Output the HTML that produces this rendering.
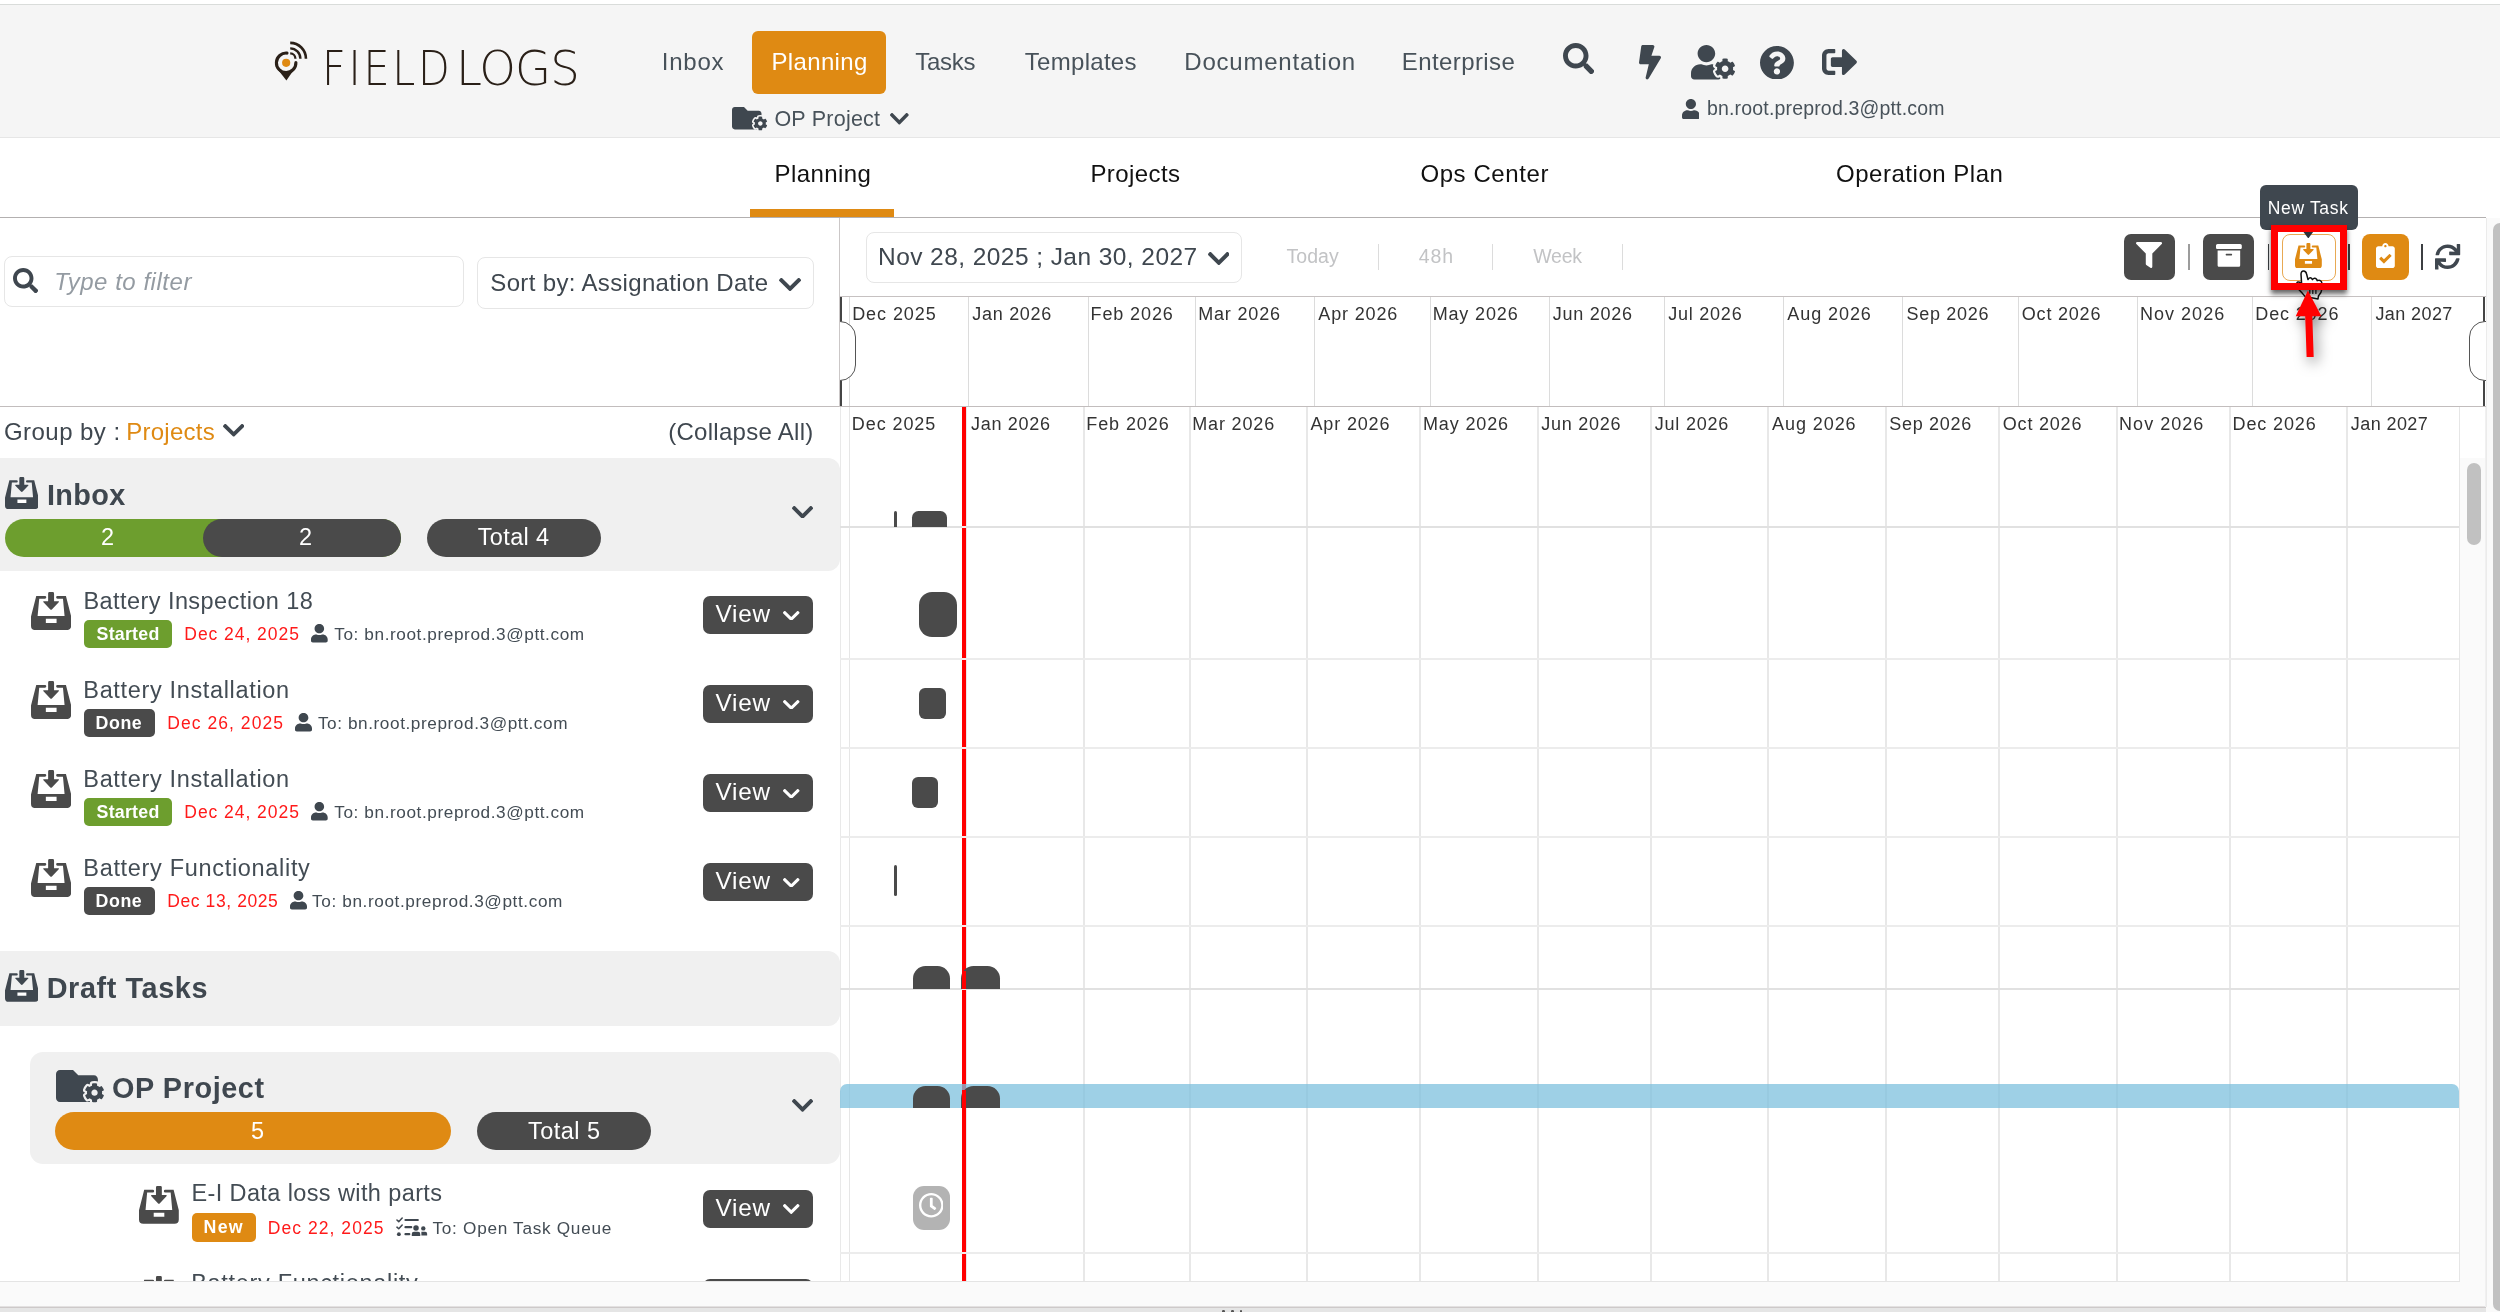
<!DOCTYPE html>
<html lang="en"><head><meta charset="utf-8"><title>FieldLogs - Planning</title>
<style>
html,body{margin:0;padding:0}
body{width:2500px;height:1312px;position:relative;overflow:hidden;background:#fff;font-family:"Liberation Sans",sans-serif}
.a{position:absolute;display:block}
.t{position:absolute;white-space:pre;line-height:1;display:block}
.clip{position:absolute;overflow:hidden}
</style></head><body>

<div class="a" style="left:0.00px;top:4.00px;width:2500.00px;height:1.00px;background:#d9dcda;"></div>
<div class="a" style="left:0.00px;top:5.00px;width:2500.00px;height:132.00px;background:#f5f5f5;"></div>
<div class="a" style="left:0.00px;top:137.00px;width:2500.00px;height:1.00px;background:#e6e6e6;"></div>
<svg class="a" style="left:270.00px;top:36.00px;" width="42.00" height="48.00" viewBox="270 36 42 48" preserveAspectRatio="none"><path d="M275.5,66.6 L286.4,80.4 L297,65.2 Z" fill="#2a2018"/><circle cx="286.16" cy="62.8" r="9.75" fill="#f5f5f5"/><path d="M287.0,53.1 A9.75,9.75 0 1 0 295.9,62.5" fill="none" stroke="#2a2018" stroke-width="3.1" stroke-linecap="round"/><g fill="none" stroke="#2a2018"><path d="M290.2,53.35 A5.35,5.35 0 0 1 295.45,58.7" stroke-width="2.3"/><path d="M290.2,48.4 A10.3,10.3 0 0 1 300.4,58.7" stroke-width="2.4"/><path d="M290.2,42.85 A15.85,15.85 0 0 1 305.95,58.7" stroke-width="2.6"/></g><circle cx="286.16" cy="62.8" r="4.1" fill="#df8a13"/></svg>
<div class="a" style="left:752.00px;top:31.00px;width:134.00px;height:63.00px;background:#df8a13;border-radius:6px;"></div>
<svg class="a" style="left:732.00px;top:107.20px;" width="29.50" height="22.40" viewBox="0 64 512 384" preserveAspectRatio="none"><path fill="#3f474f" d="M464 128H272l-64-64H48C21.490 64 0 85.490 0 112v288c0 26.510 21.490 48 48 48h416c26.510 0 48-21.490 48-48V176c0-26.510-21.490-48-48-48z"/></svg><svg class="a" style="left:751.90px;top:114.90px;" width="16.70" height="16.90" viewBox="-37.63496296296296 -48.17496296296296 587.3699259259259 608.5499259259259" preserveAspectRatio="none"><circle cx="256" cy="256" r="110" fill="#f5f5f5"/><path d="M487.400 315.700l-42.600-24.600c4.300-23.200 4.300-47 0-70.200l42.600-24.600c4.900-2.800 7.100-8.600 5.500-14-11.100-35.600-30-67.800-54.700-94.600-3.800-4.100-10-5.100-14.800-2.300L380.800 110c-17.900-15.400-38.500-27.300-60.800-35.100V25.800c0-5.600-3.900-10.500-9.400-11.700-36.700-8.200-74.300-7.800-109.200 0-5.500 1.200-9.400 6.100-9.400 11.700V75c-22.200 7.900-42.800 19.800-60.800 35.100L88.700 85.500c-4.900-2.800-11-1.900-14.800 2.300-24.700 26.700-43.600 58.900-54.700 94.600-1.700 5.400.6 11.200 5.500 14L67.300 221c-4.300 23.200-4.300 47 0 70.200l-42.600 24.600c-4.900 2.800-7.100 8.600-5.500 14 11.100 35.600 30 67.800 54.700 94.600 3.800 4.100 10 5.100 14.800 2.300l42.600-24.600c17.900 15.400 38.500 27.300 60.800 35.100v49.200c0 5.600 3.900 10.500 9.400 11.700 36.700 8.200 74.300 7.800 109.200 0 5.500-1.200 9.400-6.100 9.400-11.700v-49.200c22.200-7.900 42.800-19.800 60.800-35.100l42.600 24.600c4.900 2.800 11 1.900 14.800-2.300 24.700-26.700 43.600-58.900 54.700-94.600 1.500-5.500-.7-11.300-5.600-14.100zM256 336c-44.100 0-80-35.900-80-80s35.900-80 80-80 80 35.900 80 80-35.900 80-80 80z" fill="#3f474f" stroke="#f5f5f5" stroke-width="112.5" stroke-linejoin="round" paint-order="stroke"/></svg>
<svg class="a" style="left:889.90px;top:113.30px;" width="18.70" height="11.50" viewBox="5.66 123.49 436.69 265.01" preserveAspectRatio="none"><path fill="#3f474f" d="M207.029 381.476L12.686 187.132c-9.373-9.373-9.373-24.569 0-33.941l22.667-22.667c9.357-9.357 24.522-9.375 33.901-.04L224 284.505l154.745-154.021c9.379-9.335 24.544-9.317 33.901.04l22.667 22.667c9.373 9.373 9.373 24.569 0 33.941L240.971 381.476c-9.373 9.372-24.569 9.372-33.942 0z"/></svg>
<svg class="a" style="left:1562.70px;top:42.70px;" width="31.40" height="31.40" viewBox="0 0 512 512" preserveAspectRatio="none"><path fill="#3f474f" d="M505 442.7L405.3 343c-4.500-4.500-10.600-7-17-7H372c27.600-35.300 44-79.700 44-128C416 93.100 322.900 0 208 0S0 93.100 0 208s93.100 208 208 208c48.300 0 92.700-16.400 128-44v16.300c0 6.400 2.500 12.500 7 17l99.700 99.700c9.400 9.400 24.600 9.400 33.900 0l28.300-28.300c9.400-9.400 9.400-24.600.1-34zM208 336c-70.700 0-128-57.200-128-128 0-70.700 57.200-128 128-128 70.700 0 128 57.200 128 128 0 70.700-57.200 128-128 128z"/></svg>
<svg class="a" style="left:1638.60px;top:45.20px;" width="22.00" height="34.40" viewBox="0 0 320 512" preserveAspectRatio="none"><path fill="#3f474f" d="M296 160H180.600l42.600-129.800C227.200 15 215.700 0 200 0H56C44 0 33.800 8.900 32.200 20.800l-32 240C-1.700 275.200 9.500 288 24 288h118.700L96.600 482.500c-3.600 15.200 8 29.500 23.300 29.500 8.400 0 16.400-4.400 20.800-12l176-304c9.300-15.900-2.200-36-20.700-36z"/></svg>
<svg class="a" style="left:1691.20px;top:45.20px;" width="44.00" height="34.40" viewBox="0 0 640 512" preserveAspectRatio="none"><path fill="#3f474f" d="M610.500 373.300c2.600-14.100 2.600-28.500 0-42.600l25.800-14.900c3-1.700 4.300-5.200 3.300-8.500-6.700-21.600-18.200-41.200-33.200-57.400-2.300-2.500-6-3.100-9-1.400l-25.800 14.900c-10.900-9.300-23.400-16.500-36.900-21.300v-29.800c0-3.400-2.400-6.400-5.700-7.100-22.300-5-45-4.800-66.200 0-3.300.7-5.700 3.700-5.700 7.100v29.800c-13.500 4.800-26 12-36.900 21.300l-25.800-14.900c-2.900-1.700-6.700-1.100-9 1.400-15 16.200-26.500 35.800-33.200 57.400-1 3.300.4 6.800 3.300 8.500l25.800 14.900c-2.600 14.100-2.600 28.500 0 42.600l-25.800 14.900c-3 1.700-4.300 5.200-3.300 8.500 6.700 21.600 18.200 41.100 33.200 57.400 2.300 2.500 6 3.100 9 1.400l25.800-14.900c10.900 9.300 23.400 16.500 36.900 21.300v29.800c0 3.400 2.400 6.400 5.700 7.100 22.300 5 45 4.800 66.200 0 3.300-.7 5.700-3.700 5.700-7.100v-29.800c13.500-4.800 26-12 36.900-21.300l25.800 14.900c2.900 1.700 6.700 1.100 9-1.400 15-16.200 26.500-35.800 33.200-57.400 1-3.300-.4-6.800-3.300-8.500l-25.800-14.900zM496 400.500c-26.800 0-48.500-21.800-48.500-48.500s21.800-48.500 48.500-48.500 48.500 21.800 48.500 48.500-21.700 48.500-48.500 48.500zM224 256c70.700 0 128-57.300 128-128S294.700 0 224 0 96 57.300 96 128s57.300 128 128 128zm201.200 226.500c-2.300-1.200-4.600-2.600-6.800-3.900l-7.900 4.600c-6 3.400-12.800 5.300-19.600 5.300-10.900 0-21.400-4.600-28.900-12.600-18.300-19.800-32.300-43.900-40.200-69.600-5.500-17.700 1.900-36.400 17.900-45.700l7.900-4.600c-.1-2.600-.1-5.200 0-7.800l-7.900-4.600c-16-9.200-23.400-28-17.900-45.700.9-2.900 2.200-5.800 3.200-8.700-3.800-.3-7.500-1.200-11.400-1.200h-16.700c-22.200 10.200-46.900 16-72.900 16s-50.600-5.800-72.900-16h-16.700C60.200 288 0 348.200 0 422.400V464c0 26.500 21.500 48 48 48h352c10.100 0 19.500-3.200 27.200-8.500-1.200-3.800-2-7.700-2-11.800v-9.200z"/></svg>
<svg class="a" style="left:1759.80px;top:45.50px;" width="33.90" height="33.60" viewBox="8 8 496 496" preserveAspectRatio="none"><path fill="#3f474f" d="M504 256c0 136.997-111.043 248-248 248S8 392.997 8 256C8 119.083 119.043 8 256 8s248 111.083 248 248zM262.655 90c-54.497 0-89.255 22.957-116.549 63.758-3.536 5.286-2.353 12.415 2.715 16.258l34.699 26.310c5.205 3.947 12.621 3.008 16.665-2.122 17.864-22.658 30.113-35.797 57.303-35.797 20.429 0 45.698 13.148 45.698 32.958 0 14.976-12.363 22.667-32.534 33.976C247.128 238.528 216 254.941 216 296v4c0 6.627 5.373 12 12 12h56c6.627 0 12-5.373 12-12v-1.333c0-28.462 83.186-29.647 83.186-106.667 0-58.002-60.165-102-116.531-102zM256 338c-25.365 0-46 20.635-46 46 0 25.364 20.635 46 46 46s46-20.636 46-46c0-25.365-20.635-46-46-46z"/></svg>
<svg class="a" style="left:1822.30px;top:49.40px;" width="34.90" height="26.00" viewBox="0 64 504 384" preserveAspectRatio="none"><path fill="#3f474f" d="M497 273L329 441c-15 15-41 4.500-41-17v-96H152c-13.300 0-24-10.700-24-24v-96c0-13.300 10.700-24 24-24h136V88c0-21.400 25.900-32 41-17l168 168c9.300 9.400 9.300 24.600 0 34zM192 436v-40c0-6.600-5.400-12-12-12H96c-17.700 0-32-14.300-32-32V160c0-17.700 14.300-32 32-32h84c6.600 0 12-5.400 12-12V76c0-6.600-5.400-12-12-12H96c-53 0-96 43-96 96v192c0 53 43 96 96 96h84c6.600 0 12-5.400 12-12z"/></svg>
<svg class="a" style="left:1681.50px;top:99.30px;" width="17.80" height="20.20" viewBox="0 0 448 512" preserveAspectRatio="none"><path fill="#3f474f" d="M224 256c70.700 0 128-57.300 128-128S294.700 0 224 0 96 57.300 96 128s57.300 128 128 128zm89.600 32h-16.700c-22.200 10.200-46.900 16-72.900 16s-50.600-5.800-72.900-16h-16.700C60.200 288 0 348.200 0 422.400V464c0 26.500 21.500 48 48 48h352c26.500 0 48-21.500 48-48v-41.600c0-74.200-60.200-134.400-134.400-134.400z"/></svg>
<div class="a" style="left:750.00px;top:209.00px;width:144.00px;height:8.00px;background:#df8a13;"></div>
<div class="a" style="left:0.00px;top:217.00px;width:2486.00px;height:1.00px;background:#b3b0b0;"></div>
<div class="a" style="left:4.00px;top:256.00px;width:460.00px;height:51.00px;background:#fff;border:1px solid #e6e6e6;border-radius:8px;box-sizing:border-box;"></div>
<svg class="a" style="left:13.10px;top:268.00px;" width="25.20" height="25.30" viewBox="0 0 512 512" preserveAspectRatio="none"><path fill="#3f474f" d="M505 442.7L405.3 343c-4.500-4.500-10.600-7-17-7H372c27.600-35.300 44-79.700 44-128C416 93.100 322.900 0 208 0S0 93.100 0 208s93.100 208 208 208c48.300 0 92.700-16.400 128-44v16.300c0 6.400 2.500 12.500 7 17l99.700 99.700c9.400 9.400 24.600 9.400 33.900 0l28.300-28.300c9.400-9.400 9.400-24.600.1-34zM208 336c-70.700 0-128-57.200-128-128 0-70.700 57.200-128 128-128 70.700 0 128 57.200 128 128 0 70.700-57.200 128-128 128z"/></svg>
<div class="a" style="left:477.00px;top:256.50px;width:337.00px;height:52.00px;background:#fff;border:1px solid #e6e6e6;border-radius:8px;box-sizing:border-box;"></div>
<svg class="a" style="left:778.60px;top:277.50px;" width="22.10" height="13.00" viewBox="5.66 123.49 436.69 265.01" preserveAspectRatio="none"><path fill="#3f474f" d="M207.029 381.476L12.686 187.132c-9.373-9.373-9.373-24.569 0-33.941l22.667-22.667c9.357-9.357 24.522-9.375 33.901-.04L224 284.505l154.745-154.021c9.379-9.335 24.544-9.317 33.901.04l22.667 22.667c9.373 9.373 9.373 24.569 0 33.941L240.971 381.476c-9.373 9.372-24.569 9.372-33.942 0z"/></svg>
<svg class="a" style="left:222.60px;top:424.00px;" width="21.40" height="12.60" viewBox="5.66 123.49 436.69 265.01" preserveAspectRatio="none"><path fill="#3f474f" d="M207.029 381.476L12.686 187.132c-9.373-9.373-9.373-24.569 0-33.941l22.667-22.667c9.357-9.357 24.522-9.375 33.901-.04L224 284.505l154.745-154.021c9.379-9.335 24.544-9.317 33.901.04l22.667 22.667c9.373 9.373 9.373 24.569 0 33.941L240.971 381.476c-9.373 9.372-24.569 9.372-33.942 0z"/></svg>
<div class="clip" style="left:0;top:407px;width:840px;height:874px">
<div class="a" style="left:0.00px;top:51.00px;width:840.00px;height:112.60px;background:#f0f0f0;border-radius:0 12px 12px 0;"></div>
<div class="a" style="left:0.00px;top:544.40px;width:840.00px;height:74.50px;background:#f0f0f0;border-radius:0 12px 12px 0;"></div>
<div class="a" style="left:29.80px;top:644.70px;width:810.20px;height:112.30px;background:#f0f0f0;border-radius:13px;"></div>
<svg class="a" style="left:4.80px;top:69.50px;" width="33.60" height="32.10" viewBox="0 0 880 830" preserveAspectRatio="none"><rect x="325" y="585" width="235" height="90" fill="#fff"/><path fill="#3f474f" fill-rule="evenodd" d="M115,85 H305 Q335,85 335,115 Q335,145 305,145 H180 L145,525 H735 L700,145 H580 Q550,145 550,115 Q550,85 580,85 H765 L880,535 V735 Q880,830 785,830 H95 Q0,830 0,735 V535 Z M325,585 H560 V675 H325 Z M375,30 Q375,0 405,0 H475 Q505,0 505,30 V200 H595 Q630,200 607,225 L462,378 Q440,400 418,378 L273,225 Q250,200 285,200 H375 Z"/></svg>
<svg class="a" style="left:4.80px;top:563.10px;" width="33.60" height="31.80" viewBox="0 0 880 830" preserveAspectRatio="none"><rect x="325" y="585" width="235" height="90" fill="#fff"/><path fill="#3f474f" fill-rule="evenodd" d="M115,85 H305 Q335,85 335,115 Q335,145 305,145 H180 L145,525 H735 L700,145 H580 Q550,145 550,115 Q550,85 580,85 H765 L880,535 V735 Q880,830 785,830 H95 Q0,830 0,735 V535 Z M325,585 H560 V675 H325 Z M375,30 Q375,0 405,0 H475 Q505,0 505,30 V200 H595 Q630,200 607,225 L462,378 Q440,400 418,378 L273,225 Q250,200 285,200 H375 Z"/></svg>
<svg class="a" style="left:56.00px;top:662.90px;" width="41.90" height="32.00" viewBox="0 64 512 384" preserveAspectRatio="none"><path fill="#3f474f" d="M464 128H272l-64-64H48C21.490 64 0 85.490 0 112v288c0 26.510 21.490 48 48 48h416c26.510 0 48-21.490 48-48V176c0-26.510-21.490-48-48-48z"/></svg><svg class="a" style="left:83.30px;top:674.00px;" width="23.10" height="23.40" viewBox="-37.22117647058823 -47.76117647058823 586.5423529411764 607.7223529411765" preserveAspectRatio="none"><circle cx="256" cy="256" r="110" fill="#f0f0f0"/><path d="M487.400 315.700l-42.600-24.600c4.300-23.200 4.300-47 0-70.200l42.600-24.600c4.900-2.800 7.100-8.600 5.500-14-11.100-35.600-30-67.800-54.700-94.600-3.800-4.100-10-5.100-14.800-2.300L380.800 110c-17.900-15.400-38.500-27.300-60.800-35.100V25.800c0-5.600-3.900-10.500-9.400-11.700-36.700-8.200-74.300-7.800-109.200 0-5.500 1.200-9.400 6.100-9.400 11.700V75c-22.200 7.900-42.800 19.800-60.800 35.100L88.700 85.500c-4.900-2.800-11-1.900-14.800 2.300-24.700 26.700-43.600 58.900-54.700 94.600-1.700 5.400.6 11.200 5.500 14L67.300 221c-4.300 23.200-4.300 47 0 70.200l-42.600 24.600c-4.900 2.800-7.100 8.600-5.500 14 11.100 35.600 30 67.800 54.700 94.600 3.800 4.100 10 5.100 14.800 2.300l42.600-24.600c17.900 15.400 38.500 27.300 60.800 35.100v49.200c0 5.600 3.900 10.500 9.400 11.700 36.700 8.200 74.300 7.800 109.200 0 5.500-1.200 9.400-6.100 9.400-11.700v-49.200c22.200-7.900 42.800-19.800 60.800-35.100l42.600 24.600c4.900 2.800 11 1.900 14.800-2.300 24.700-26.700 43.600-58.900 54.700-94.600 1.500-5.500-.7-11.300-5.600-14.100zM256 336c-44.100 0-80-35.900-80-80s35.900-80 80-80 80 35.900 80 80-35.900 80-80 80z" fill="#3f474f" stroke="#f0f0f0" stroke-width="111.7" stroke-linejoin="round" paint-order="stroke"/></svg>
<div class="a" style="left:5.00px;top:111.90px;width:396.20px;height:37.80px;background:#6d9e2e;border-radius:19px;"></div>
<div class="a" style="left:203.00px;top:111.90px;width:198.20px;height:37.80px;background:#4a4a4a;border-radius:19px;"></div>
<div class="a" style="left:426.70px;top:111.90px;width:174.10px;height:37.80px;background:#4a4a4a;border-radius:19px;"></div>
<div class="a" style="left:55.20px;top:705.30px;width:396.00px;height:37.80px;background:#df8a13;border-radius:19px;"></div>
<div class="a" style="left:476.70px;top:705.30px;width:174.40px;height:37.80px;background:#4a4a4a;border-radius:19px;"></div>
<svg class="a" style="left:792.20px;top:98.60px;" width="21.10" height="12.80" viewBox="5.66 123.49 436.69 265.01" preserveAspectRatio="none"><path fill="#3f474f" d="M207.029 381.476L12.686 187.132c-9.373-9.373-9.373-24.569 0-33.941l22.667-22.667c9.357-9.357 24.522-9.375 33.901-.04L224 284.505l154.745-154.021c9.379-9.335 24.544-9.317 33.901.04l22.667 22.667c9.373 9.373 9.373 24.569 0 33.941L240.971 381.476c-9.373 9.372-24.569 9.372-33.942 0z"/></svg>
<svg class="a" style="left:792.20px;top:692.20px;" width="21.10" height="12.80" viewBox="5.66 123.49 436.69 265.01" preserveAspectRatio="none"><path fill="#3f474f" d="M207.029 381.476L12.686 187.132c-9.373-9.373-9.373-24.569 0-33.941l22.667-22.667c9.357-9.357 24.522-9.375 33.901-.04L224 284.505l154.745-154.021c9.379-9.335 24.544-9.317 33.901.04l22.667 22.667c9.373 9.373 9.373 24.569 0 33.941L240.971 381.476c-9.373 9.372-24.569 9.372-33.942 0z"/></svg>
<svg class="a" style="left:31.10px;top:185.30px;" width="40.20" height="38.10" viewBox="0 0 880 830" preserveAspectRatio="none"><path fill="#4a4a4a" fill-rule="evenodd" d="M115,85 H305 Q335,85 335,115 Q335,145 305,145 H180 L145,525 H735 L700,145 H580 Q550,145 550,115 Q550,85 580,85 H765 L880,535 V735 Q880,830 785,830 H95 Q0,830 0,735 V535 Z M325,585 H560 V675 H325 Z M375,30 Q375,0 405,0 H475 Q505,0 505,30 V200 H595 Q630,200 607,225 L462,378 Q440,400 418,378 L273,225 Q250,200 285,200 H375 Z"/></svg>
<div class="a" style="left:83.50px;top:213.00px;width:88.20px;height:28.30px;background:#6d9e2e;border-radius:5px;"></div>
<svg class="a" style="left:311.30px;top:217.20px;" width="16.70" height="18.50" viewBox="0 0 448 512" preserveAspectRatio="none"><path fill="#3f474f" d="M224 256c70.700 0 128-57.300 128-128S294.700 0 224 0 96 57.300 96 128s57.300 128 128 128zm89.600 32h-16.700c-22.200 10.200-46.900 16-72.900 16s-50.600-5.800-72.900-16h-16.700C60.200 288 0 348.200 0 422.400V464c0 26.500 21.500 48 48 48h352c26.500 0 48-21.500 48-48v-41.600c0-74.200-60.200-134.400-134.400-134.400z"/></svg>
<div class="a" style="left:703.00px;top:189.00px;width:110.00px;height:38.00px;background:#4a4a4a;border-radius:7px;"></div>
<svg class="a" style="left:783.40px;top:203.60px;" width="16.50" height="9.90" viewBox="5.66 123.49 436.69 265.01" preserveAspectRatio="none"><path fill="#fff" d="M207.029 381.476L12.686 187.132c-9.373-9.373-9.373-24.569 0-33.941l22.667-22.667c9.357-9.357 24.522-9.375 33.901-.04L224 284.505l154.745-154.021c9.379-9.335 24.544-9.317 33.901.04l22.667 22.667c9.373 9.373 9.373 24.569 0 33.941L240.971 381.476c-9.373 9.372-24.569 9.372-33.942 0z"/></svg>
<svg class="a" style="left:31.10px;top:274.30px;" width="40.20" height="38.10" viewBox="0 0 880 830" preserveAspectRatio="none"><path fill="#4a4a4a" fill-rule="evenodd" d="M115,85 H305 Q335,85 335,115 Q335,145 305,145 H180 L145,525 H735 L700,145 H580 Q550,145 550,115 Q550,85 580,85 H765 L880,535 V735 Q880,830 785,830 H95 Q0,830 0,735 V535 Z M325,585 H560 V675 H325 Z M375,30 Q375,0 405,0 H475 Q505,0 505,30 V200 H595 Q630,200 607,225 L462,378 Q440,400 418,378 L273,225 Q250,200 285,200 H375 Z"/></svg>
<div class="a" style="left:83.60px;top:302.00px;width:71.10px;height:28.30px;background:#4a4a4a;border-radius:5px;"></div>
<svg class="a" style="left:295.10px;top:306.20px;" width="17.00" height="18.50" viewBox="0 0 448 512" preserveAspectRatio="none"><path fill="#3f474f" d="M224 256c70.700 0 128-57.300 128-128S294.700 0 224 0 96 57.300 96 128s57.300 128 128 128zm89.600 32h-16.700c-22.200 10.200-46.900 16-72.900 16s-50.600-5.800-72.900-16h-16.700C60.200 288 0 348.200 0 422.400V464c0 26.500 21.500 48 48 48h352c26.500 0 48-21.500 48-48v-41.600c0-74.200-60.200-134.400-134.400-134.400z"/></svg>
<div class="a" style="left:703.00px;top:278.00px;width:110.00px;height:38.00px;background:#4a4a4a;border-radius:7px;"></div>
<svg class="a" style="left:783.40px;top:292.60px;" width="16.50" height="9.90" viewBox="5.66 123.49 436.69 265.01" preserveAspectRatio="none"><path fill="#fff" d="M207.029 381.476L12.686 187.132c-9.373-9.373-9.373-24.569 0-33.941l22.667-22.667c9.357-9.357 24.522-9.375 33.901-.04L224 284.505l154.745-154.021c9.379-9.335 24.544-9.317 33.901.04l22.667 22.667c9.373 9.373 9.373 24.569 0 33.941L240.971 381.476c-9.373 9.372-24.569 9.372-33.942 0z"/></svg>
<svg class="a" style="left:31.10px;top:363.30px;" width="40.20" height="38.10" viewBox="0 0 880 830" preserveAspectRatio="none"><path fill="#4a4a4a" fill-rule="evenodd" d="M115,85 H305 Q335,85 335,115 Q335,145 305,145 H180 L145,525 H735 L700,145 H580 Q550,145 550,115 Q550,85 580,85 H765 L880,535 V735 Q880,830 785,830 H95 Q0,830 0,735 V535 Z M325,585 H560 V675 H325 Z M375,30 Q375,0 405,0 H475 Q505,0 505,30 V200 H595 Q630,200 607,225 L462,378 Q440,400 418,378 L273,225 Q250,200 285,200 H375 Z"/></svg>
<div class="a" style="left:83.50px;top:391.00px;width:88.20px;height:28.30px;background:#6d9e2e;border-radius:5px;"></div>
<svg class="a" style="left:311.30px;top:395.20px;" width="16.70" height="18.50" viewBox="0 0 448 512" preserveAspectRatio="none"><path fill="#3f474f" d="M224 256c70.700 0 128-57.300 128-128S294.700 0 224 0 96 57.300 96 128s57.300 128 128 128zm89.600 32h-16.700c-22.200 10.200-46.900 16-72.900 16s-50.600-5.800-72.900-16h-16.700C60.200 288 0 348.200 0 422.400V464c0 26.500 21.500 48 48 48h352c26.500 0 48-21.500 48-48v-41.600c0-74.200-60.200-134.400-134.400-134.400z"/></svg>
<div class="a" style="left:703.00px;top:367.00px;width:110.00px;height:38.00px;background:#4a4a4a;border-radius:7px;"></div>
<svg class="a" style="left:783.40px;top:381.60px;" width="16.50" height="9.90" viewBox="5.66 123.49 436.69 265.01" preserveAspectRatio="none"><path fill="#fff" d="M207.029 381.476L12.686 187.132c-9.373-9.373-9.373-24.569 0-33.941l22.667-22.667c9.357-9.357 24.522-9.375 33.901-.04L224 284.505l154.745-154.021c9.379-9.335 24.544-9.317 33.901.04l22.667 22.667c9.373 9.373 9.373 24.569 0 33.941L240.971 381.476c-9.373 9.372-24.569 9.372-33.942 0z"/></svg>
<svg class="a" style="left:31.10px;top:452.30px;" width="40.20" height="38.10" viewBox="0 0 880 830" preserveAspectRatio="none"><path fill="#4a4a4a" fill-rule="evenodd" d="M115,85 H305 Q335,85 335,115 Q335,145 305,145 H180 L145,525 H735 L700,145 H580 Q550,145 550,115 Q550,85 580,85 H765 L880,535 V735 Q880,830 785,830 H95 Q0,830 0,735 V535 Z M325,585 H560 V675 H325 Z M375,30 Q375,0 405,0 H475 Q505,0 505,30 V200 H595 Q630,200 607,225 L462,378 Q440,400 418,378 L273,225 Q250,200 285,200 H375 Z"/></svg>
<div class="a" style="left:83.60px;top:480.00px;width:71.10px;height:28.30px;background:#4a4a4a;border-radius:5px;"></div>
<svg class="a" style="left:289.70px;top:484.20px;" width="17.00" height="18.50" viewBox="0 0 448 512" preserveAspectRatio="none"><path fill="#3f474f" d="M224 256c70.700 0 128-57.300 128-128S294.700 0 224 0 96 57.300 96 128s57.300 128 128 128zm89.600 32h-16.700c-22.200 10.200-46.900 16-72.900 16s-50.600-5.800-72.900-16h-16.700C60.200 288 0 348.200 0 422.400V464c0 26.500 21.500 48 48 48h352c26.500 0 48-21.500 48-48v-41.600c0-74.200-60.200-134.400-134.400-134.400z"/></svg>
<div class="a" style="left:703.00px;top:456.00px;width:110.00px;height:38.00px;background:#4a4a4a;border-radius:7px;"></div>
<svg class="a" style="left:783.40px;top:470.60px;" width="16.50" height="9.90" viewBox="5.66 123.49 436.69 265.01" preserveAspectRatio="none"><path fill="#fff" d="M207.029 381.476L12.686 187.132c-9.373-9.373-9.373-24.569 0-33.941l22.667-22.667c9.357-9.357 24.522-9.375 33.901-.04L224 284.505l154.745-154.021c9.379-9.335 24.544-9.317 33.901.04l22.667 22.667c9.373 9.373 9.373 24.569 0 33.941L240.971 381.476c-9.373 9.372-24.569 9.372-33.942 0z"/></svg>
<svg class="a" style="left:139.10px;top:779.00px;" width="39.80" height="37.80" viewBox="0 0 880 830" preserveAspectRatio="none"><path fill="#4a4a4a" fill-rule="evenodd" d="M115,85 H305 Q335,85 335,115 Q335,145 305,145 H180 L145,525 H735 L700,145 H580 Q550,145 550,115 Q550,85 580,85 H765 L880,535 V735 Q880,830 785,830 H95 Q0,830 0,735 V535 Z M325,585 H560 V675 H325 Z M375,30 Q375,0 405,0 H475 Q505,0 505,30 V200 H595 Q630,200 607,225 L462,378 Q440,400 418,378 L273,225 Q250,200 285,200 H375 Z"/></svg>
<div class="a" style="left:703.00px;top:782.60px;width:110.00px;height:38.00px;background:#4a4a4a;border-radius:7px;"></div>
<svg class="a" style="left:783.40px;top:797.20px;" width="16.50" height="9.90" viewBox="5.66 123.49 436.69 265.01" preserveAspectRatio="none"><path fill="#fff" d="M207.029 381.476L12.686 187.132c-9.373-9.373-9.373-24.569 0-33.941l22.667-22.667c9.357-9.357 24.522-9.375 33.901-.04L224 284.505l154.745-154.021c9.379-9.335 24.544-9.317 33.901.04l22.667 22.667c9.373 9.373 9.373 24.569 0 33.941L240.971 381.476c-9.373 9.372-24.569 9.372-33.942 0z"/></svg>
<svg class="a" style="left:139.10px;top:868.60px;" width="39.80" height="37.80" viewBox="0 0 880 830" preserveAspectRatio="none"><path fill="#4a4a4a" fill-rule="evenodd" d="M115,85 H305 Q335,85 335,115 Q335,145 305,145 H180 L145,525 H735 L700,145 H580 Q550,145 550,115 Q550,85 580,85 H765 L880,535 V735 Q880,830 785,830 H95 Q0,830 0,735 V535 Z M325,585 H560 V675 H325 Z M375,30 Q375,0 405,0 H475 Q505,0 505,30 V200 H595 Q630,200 607,225 L462,378 Q440,400 418,378 L273,225 Q250,200 285,200 H375 Z"/></svg>
<div class="a" style="left:703.00px;top:872.20px;width:110.00px;height:38.00px;background:#4a4a4a;border-radius:7px;"></div>
<svg class="a" style="left:783.40px;top:886.80px;" width="16.50" height="9.90" viewBox="5.66 123.49 436.69 265.01" preserveAspectRatio="none"><path fill="#fff" d="M207.029 381.476L12.686 187.132c-9.373-9.373-9.373-24.569 0-33.941l22.667-22.667c9.357-9.357 24.522-9.375 33.901-.04L224 284.505l154.745-154.021c9.379-9.335 24.544-9.317 33.901.04l22.667 22.667c9.373 9.373 9.373 24.569 0 33.941L240.971 381.476c-9.373 9.372-24.569 9.372-33.942 0z"/></svg>
<div class="a" style="left:191.90px;top:806.40px;width:64.00px;height:28.20px;background:#df8a13;border-radius:5px;"></div>
<svg class="a" style="left:395.90px;top:809.50px;" width="31.70" height="19.50" viewBox="0 0 1155 710" preserveAspectRatio="none"><g stroke="#3f474f" fill="none" stroke-linecap="round" stroke-linejoin="round"><polyline points="35,110 100,170 225,35" stroke-width="55"/><polyline points="35,370 100,430 225,295" stroke-width="55"/><line x1="345" y1="110" x2="795" y2="110" stroke-width="80"/><line x1="345" y1="370" x2="555" y2="370" stroke-width="80"/><line x1="345" y1="625" x2="485" y2="625" stroke-width="80"/></g><g fill="#3f474f"><circle cx="105" cy="625" r="70"/><circle cx="730" cy="400" r="100"/><circle cx="995" cy="415" r="80"/><path d="M575,700 V620 Q575,540 655,540 H805 Q885,540 885,620 V700 Z"/><path d="M925,670 V540 H1065 Q1135,540 1135,610 V670 Z"/></g></svg>
</div>
<div class="a" style="left:0.00px;top:406.00px;width:2486.00px;height:1.00px;background:#c2bdbd;"></div>
<div class="a" style="left:865.70px;top:231.50px;width:376.70px;height:51.00px;background:#fff;border:1px solid #e6e6e6;border-radius:8px;box-sizing:border-box;"></div>
<svg class="a" style="left:1207.80px;top:252.30px;" width="21.70" height="13.20" viewBox="5.66 123.49 436.69 265.01" preserveAspectRatio="none"><path fill="#3f474f" d="M207.029 381.476L12.686 187.132c-9.373-9.373-9.373-24.569 0-33.941l22.667-22.667c9.357-9.357 24.522-9.375 33.901-.04L224 284.505l154.745-154.021c9.379-9.335 24.544-9.317 33.901.04l22.667 22.667c9.373 9.373 9.373 24.569 0 33.941L240.971 381.476c-9.373 9.372-24.569 9.372-33.942 0z"/></svg>
<div class="a" style="left:1378.00px;top:244.00px;width:1.00px;height:26.00px;background:#dcdcdc;"></div>
<div class="a" style="left:1492.00px;top:244.00px;width:1.00px;height:26.00px;background:#dcdcdc;"></div>
<div class="a" style="left:1622.00px;top:244.00px;width:1.00px;height:26.00px;background:#dcdcdc;"></div>
<div class="a" style="left:2123.60px;top:234.00px;width:51.60px;height:46.40px;background:#4a4a4a;border-radius:7px;"></div>
<svg class="a" style="left:2136.30px;top:242.10px;" width="26.10" height="26.10" viewBox="0 0 512 512" preserveAspectRatio="none"><path fill="#fff" d="M487.976 0H24.028C2.710 0-8.047 25.866 7.058 40.971L192 225.941V432c0 7.831 3.821 15.170 10.237 19.662l80 55.980C298.020 518.690 320 507.493 320 487.980V225.941l184.947-184.970C520.021 25.896 509.338 0 487.976 0z"/></svg>
<div class="a" style="left:2202.90px;top:234.00px;width:51.40px;height:46.40px;background:#4a4a4a;border-radius:7px;"></div>
<svg class="a" style="left:2215.80px;top:243.90px;" width="25.80" height="22.80" viewBox="0 32 512 448" preserveAspectRatio="none"><path fill="#fff" d="M32 448c0 17.700 14.300 32 32 32h384c17.700 0 32-14.300 32-32V160H32v288zm160-212c0-6.600 5.400-12 12-12h104c6.600 0 12 5.400 12 12v8c0 6.600-5.400 12-12 12H204c-6.600 0-12-5.400-12-12v-8zM480 32H32C14.300 32 0 46.300 0 64v48c0 8.800 7.200 16 16 16h480c8.800 0 16-7.200 16-16V64c0-17.700-14.300-32-32-32z"/></svg>
<div class="a" style="left:2281.60px;top:234.00px;width:54.40px;height:46.60px;background:#fff;border:1px solid #e8a954;border-radius:8px;box-sizing:border-box;"></div>
<svg class="a" style="left:2294.90px;top:242.60px;" width="26.80" height="25.40" viewBox="0 0 880 830" preserveAspectRatio="none"><path fill="#df8a13" fill-rule="evenodd" d="M115,85 H305 Q335,85 335,115 Q335,145 305,145 H180 L145,525 H735 L700,145 H580 Q550,145 550,115 Q550,85 580,85 H765 L880,535 V735 Q880,830 785,830 H95 Q0,830 0,735 V535 Z M325,585 H560 V675 H325 Z M375,30 Q375,0 405,0 H475 Q505,0 505,30 V200 H595 Q630,200 607,225 L462,378 Q440,400 418,378 L273,225 Q250,200 285,200 H375 Z"/></svg>
<div class="a" style="left:2361.70px;top:234.00px;width:47.00px;height:46.40px;background:#df8a13;border-radius:8px;"></div>
<svg class="a" style="left:2375.90px;top:242.70px;" width="18.80" height="25.20" viewBox="0 0 384 512" preserveAspectRatio="none"><path fill="#fff" d="M336 64h-80c0-35.300-28.700-64-64-64s-64 28.700-64 64H48C21.500 64 0 85.500 0 112v352c0 26.500 21.500 48 48 48h288c26.500 0 48-21.500 48-48V112c0-26.500-21.500-48-48-48zM192 40c13.300 0 24 10.700 24 24s-10.700 24-24 24-24-10.700-24-24 10.700-24 24-24zm121.200 231.800l-143 141.800c-4.700 4.700-12.300 4.600-17-.1l-82.600-83.300c-4.700-4.700-4.600-12.300.1-17L99.100 285c4.700-4.700 12.300-4.600 17 .1l46 46.400 106-105.200c4.700-4.700 12.300-4.600 17 .1l28.200 28.400c4.700 4.800 4.600 12.300-.1 17z"/></svg>
<div class="a" style="left:2188.00px;top:243.80px;width:2.00px;height:26.00px;background:#9c9c9c;"></div>
<div class="a" style="left:2267.60px;top:243.90px;width:1.80px;height:25.80px;background:#3c3f42;"></div>
<div class="a" style="left:2348.00px;top:243.90px;width:1.80px;height:25.80px;background:#3c3f42;"></div>
<div class="a" style="left:2420.80px;top:243.90px;width:1.80px;height:25.80px;background:#3c3f42;"></div>
<svg class="a" style="left:2435.40px;top:244.20px;" width="25.20" height="25.50" viewBox="0 0 512 512" preserveAspectRatio="none"><path fill="#3f474f" d="M440.65 12.57l4 82.77A247.16 247.16 0 0 0 255.83 8C134.73 8 33.91 94.92 12.29 209.82A12 12 0 0 0 24.09 224h49.05a12 12 0 0 0 11.67-9.26 175.91 175.91 0 0 1 317-56.94l-101.46-4.86a12 12 0 0 0-12.57 12v47.41a12 12 0 0 0 12 12H500a12 12 0 0 0 12-12V12a12 12 0 0 0-12-12h-47.37a12 12 0 0 0-11.98 12.57zM255.83 432a175.61 175.61 0 0 1-146-77.8l101.8 4.87a12 12 0 0 0 12.57-12v-47.4a12 12 0 0 0-12-12H12a12 12 0 0 0-12 12V500a12 12 0 0 0 12 12h47.35a12 12 0 0 0 12-12.6l-4.15-82.57A247.17 247.17 0 0 0 255.83 504c121.11 0 221.93-86.92 243.55-201.82a12 12 0 0 0-11.8-14.18h-49.05a12 12 0 0 0-11.67 9.26A175.86 175.86 0 0 1 255.83 432z"/></svg>
<div class="a" style="left:839.00px;top:296.00px;width:1647.00px;height:1.00px;background:#c6c1c1;"></div>
<div class="a" style="left:849.20px;top:297.00px;width:1.00px;height:109.00px;background:#dcdcdc;"></div>
<div class="a" style="left:968.37px;top:297.00px;width:1.00px;height:109.00px;background:#dcdcdc;"></div>
<div class="a" style="left:1087.54px;top:297.00px;width:1.00px;height:109.00px;background:#dcdcdc;"></div>
<div class="a" style="left:1195.17px;top:297.00px;width:1.00px;height:109.00px;background:#dcdcdc;"></div>
<div class="a" style="left:1314.34px;top:297.00px;width:1.00px;height:109.00px;background:#dcdcdc;"></div>
<div class="a" style="left:1429.66px;top:297.00px;width:1.00px;height:109.00px;background:#dcdcdc;"></div>
<div class="a" style="left:1548.83px;top:297.00px;width:1.00px;height:109.00px;background:#dcdcdc;"></div>
<div class="a" style="left:1664.15px;top:297.00px;width:1.00px;height:109.00px;background:#dcdcdc;"></div>
<div class="a" style="left:1783.32px;top:297.00px;width:1.00px;height:109.00px;background:#dcdcdc;"></div>
<div class="a" style="left:1902.49px;top:297.00px;width:1.00px;height:109.00px;background:#dcdcdc;"></div>
<div class="a" style="left:2017.81px;top:297.00px;width:1.00px;height:109.00px;background:#dcdcdc;"></div>
<div class="a" style="left:2136.98px;top:297.00px;width:1.00px;height:109.00px;background:#dcdcdc;"></div>
<div class="a" style="left:2252.30px;top:297.00px;width:1.00px;height:109.00px;background:#dcdcdc;"></div>
<div class="a" style="left:2371.47px;top:297.00px;width:1.00px;height:109.00px;background:#dcdcdc;"></div>
<div class="a" style="left:839.50px;top:297.00px;width:2.30px;height:109.00px;background:#444;"></div>
<div class="a" style="left:2483.00px;top:297.00px;width:2.30px;height:109.00px;background:#444;"></div>
<div class="a" style="left:823.00px;top:321.30px;width:33.00px;height:59.60px;background:#fff;border:1px solid #555;border-radius:16px;box-sizing:border-box;"></div>
<div class="a" style="left:2469.00px;top:321.30px;width:33.00px;height:59.60px;background:#fff;border:1px solid #555;border-radius:16px;box-sizing:border-box;"></div>
<div class="a" style="left:815.00px;top:300.00px;width:24.00px;height:100.00px;background:#fff;"></div>
<div class="a" style="left:839.00px;top:218.00px;width:1.00px;height:189.00px;background:#cbc7c7;"></div>
<div class="a" style="left:2486.00px;top:218.00px;width:14.00px;height:1094.00px;background:#fafafa;"></div>
<div class="clip" style="left:840px;top:407px;width:1620px;height:873.5px">
<div class="a" style="left:0.00px;top:0.00px;width:1.00px;height:874.00px;background:#e9e9e9;"></div>
<div class="a" style="left:8.50px;top:0.00px;width:1.50px;height:874.00px;background:#e6e6e6;"></div>
<div class="a" style="left:125.47px;top:0.00px;width:2.00px;height:874.00px;background:#e8e8e8;"></div>
<div class="a" style="left:242.74px;top:0.00px;width:2.00px;height:874.00px;background:#e8e8e8;"></div>
<div class="a" style="left:348.67px;top:0.00px;width:2.00px;height:874.00px;background:#e8e8e8;"></div>
<div class="a" style="left:465.94px;top:0.00px;width:2.00px;height:874.00px;background:#e8e8e8;"></div>
<div class="a" style="left:579.43px;top:0.00px;width:2.00px;height:874.00px;background:#e8e8e8;"></div>
<div class="a" style="left:696.70px;top:0.00px;width:2.00px;height:874.00px;background:#e8e8e8;"></div>
<div class="a" style="left:810.20px;top:0.00px;width:2.00px;height:874.00px;background:#e8e8e8;"></div>
<div class="a" style="left:927.47px;top:0.00px;width:2.00px;height:874.00px;background:#e8e8e8;"></div>
<div class="a" style="left:1044.74px;top:0.00px;width:2.00px;height:874.00px;background:#e8e8e8;"></div>
<div class="a" style="left:1158.23px;top:0.00px;width:2.00px;height:874.00px;background:#e8e8e8;"></div>
<div class="a" style="left:1275.50px;top:0.00px;width:2.00px;height:874.00px;background:#e8e8e8;"></div>
<div class="a" style="left:1388.99px;top:0.00px;width:2.00px;height:874.00px;background:#e8e8e8;"></div>
<div class="a" style="left:1506.27px;top:0.00px;width:2.00px;height:874.00px;background:#e8e8e8;"></div>
<div class="a" style="left:0.00px;top:119.00px;width:1620.00px;height:2.00px;background:#e1e1e1;"></div>
<div class="a" style="left:0.00px;top:251.00px;width:1620.00px;height:2.00px;background:#ececec;"></div>
<div class="a" style="left:0.00px;top:340.00px;width:1620.00px;height:2.00px;background:#ececec;"></div>
<div class="a" style="left:0.00px;top:429.00px;width:1620.00px;height:2.00px;background:#ececec;"></div>
<div class="a" style="left:0.00px;top:518.00px;width:1620.00px;height:2.00px;background:#ececec;"></div>
<div class="a" style="left:0.00px;top:581.00px;width:1620.00px;height:2.00px;background:#e1e1e1;"></div>
<div class="a" style="left:0.00px;top:844.50px;width:1620.00px;height:2.00px;background:#ececec;"></div>
<div class="a" style="left:122.20px;top:0.00px;width:3.80px;height:874.00px;background:#ff0000;"></div>
<div class="a" style="left:122.20px;top:119.00px;width:3.80px;height:2.00px;background:#fbe9e9;"></div>
<div class="a" style="left:122.20px;top:251.00px;width:3.80px;height:2.00px;background:#fbe9e9;"></div>
<div class="a" style="left:122.20px;top:340.00px;width:3.80px;height:2.00px;background:#fbe9e9;"></div>
<div class="a" style="left:122.20px;top:429.00px;width:3.80px;height:2.00px;background:#fbe9e9;"></div>
<div class="a" style="left:122.20px;top:518.00px;width:3.80px;height:2.00px;background:#fbe9e9;"></div>
<div class="a" style="left:122.20px;top:581.00px;width:3.80px;height:2.00px;background:#fbe9e9;"></div>
<div class="a" style="left:122.20px;top:844.50px;width:3.80px;height:2.00px;background:#fbe9e9;"></div>
<div class="a" style="left:0.00px;top:677.20px;width:1619.30px;height:23.50px;background:rgba(125,192,222,.75);border-radius:7px 7px 0 0;"></div>
<div class="a" style="left:53.80px;top:103.90px;width:3.40px;height:16.60px;background:#4a4a4a;border-radius:1.7px 1.7px 0 0;"></div>
<div class="a" style="left:72.00px;top:103.90px;width:34.80px;height:16.60px;background:#4a4a4a;border-radius:6.5px 6.5px 0 0;"></div>
<div class="a" style="left:79.40px;top:185.10px;width:38.00px;height:44.60px;background:#4a4a4a;border-radius:13px;"></div>
<div class="a" style="left:79.20px;top:280.80px;width:27.00px;height:31.30px;background:#4a4a4a;border-radius:6px;"></div>
<div class="a" style="left:72.10px;top:369.50px;width:26.40px;height:31.40px;background:#4a4a4a;border-radius:6px;"></div>
<div class="a" style="left:53.80px;top:457.80px;width:3.40px;height:31.70px;background:#4a4a4a;border-radius:1.7px;"></div>
<div class="a" style="left:72.60px;top:559.20px;width:37.70px;height:22.60px;background:#4a4a4a;border-radius:12.5px 12.5px 0 0;"></div>
<div class="a" style="left:121.30px;top:559.20px;width:38.40px;height:22.60px;background:#4a4a4a;border-radius:12.5px 12.5px 0 0;"></div>
<div class="a" style="left:122.20px;top:563.70px;width:3.80px;height:18.10px;background:#ff0000;"></div>
<div class="a" style="left:72.60px;top:678.90px;width:37.70px;height:21.80px;background:#4a4a4a;border-radius:12.5px 12.5px 0 0;"></div>
<div class="a" style="left:121.30px;top:678.90px;width:38.40px;height:21.80px;background:#4a4a4a;border-radius:12.5px 12.5px 0 0;"></div>
<div class="a" style="left:122.20px;top:683.40px;width:3.80px;height:17.30px;background:#ff0000;"></div>
<div class="a" style="left:72.60px;top:778.80px;width:37.70px;height:44.20px;background:#b3b3b3;border-radius:11px;"></div>
<svg class="a" style="left:78.70px;top:786.20px;" width="24.60" height="24.50" viewBox="8 8 496 496" preserveAspectRatio="none"><path fill="#fff" d="M256 8C119 8 8 119 8 256s111 248 248 248 248-111 248-248S393 8 256 8zm0 448c-110.500 0-200-89.500-200-200S145.500 56 256 56s200 89.500 200 200-89.500 200-200 200zm61.800-104.400l-84.900-61.700c-3.100-2.300-4.900-5.900-4.900-9.700V116c0-6.600 5.400-12 12-12h32c6.600 0 12 5.400 12 12v141.700l66.800 48.600c5.400 3.900 6.500 11.400 2.600 16.800L334.600 349c-3.900 5.300-11.400 6.500-16.800 2.600z"/></svg>
</div>
<div class="a" style="left:2459.00px;top:407.00px;width:1.00px;height:874.00px;background:#e6e6e6;"></div>
<div class="a" style="left:2460.00px;top:458.00px;width:25.00px;height:823.00px;background:#fafafa;"></div>
<div class="a" style="left:2466.70px;top:463.10px;width:14.00px;height:82.10px;background:#c1c1c1;border-radius:7px;"></div>
<div class="a" style="left:2260.00px;top:185.00px;width:98.00px;height:45.00px;background:#3f474f;border-radius:6px;"></div>
<svg class="a" style="left:2302.00px;top:229.50px;" width="12.60" height="8.50" viewBox="0 0 12.6 8.5" preserveAspectRatio="none"><path d="M0,0 H12.6 L6.3,8.5 Z" fill="#2c3238"/></svg>
<div class="a" style="left:0;top:0;width:2500px;height:1312px;will-change:transform">
<span class="t" style="left:321.70px;top:43.50px;font-size:48px;color:#2a2018;letter-spacing:3.175px;transform:scaleX(0.86);transform-origin:0 0;font-family:'DejaVu Sans Light', 'DejaVu Sans', 'Liberation Sans', sans-serif;">FIELD</span>
<span class="t" style="left:456.05px;top:43.50px;font-size:48px;color:#2a2018;letter-spacing:-0.979px;transform:scaleX(0.97);transform-origin:0 0;font-family:'DejaVu Sans Light', 'DejaVu Sans', 'Liberation Sans', sans-serif;">LOGS</span>
<span class="t" style="left:661.80px;top:49.70px;font-size:24px;color:#48525a;letter-spacing:0.747px;">Inbox</span>
<span class="t" style="left:771.50px;top:49.70px;font-size:24px;color:#ffffff;letter-spacing:0.348px;">Planning</span>
<span class="t" style="left:915.30px;top:49.70px;font-size:24px;color:#48525a;letter-spacing:-0.287px;">Tasks</span>
<span class="t" style="left:1024.80px;top:49.70px;font-size:24px;color:#48525a;letter-spacing:0.290px;">Templates</span>
<span class="t" style="left:1184.30px;top:49.70px;font-size:24px;color:#48525a;letter-spacing:0.785px;">Documentation</span>
<span class="t" style="left:1401.80px;top:49.70px;font-size:24px;color:#48525a;letter-spacing:0.407px;">Enterprise</span>
<span class="t" style="left:774.40px;top:108.55px;font-size:21.5px;color:#48525a;letter-spacing:0.236px;">OP Project</span>
<span class="t" style="left:1707.00px;top:99.15px;font-size:19.5px;color:#48525a;letter-spacing:0.171px;">bn.root.preprod.3@ptt.com</span>
<span class="t" style="left:774.50px;top:162.00px;font-size:24px;color:#111;letter-spacing:0.405px;">Planning</span>
<span class="t" style="left:1090.40px;top:162.00px;font-size:24px;color:#111;letter-spacing:0.415px;">Projects</span>
<span class="t" style="left:1420.40px;top:162.00px;font-size:24px;color:#111;letter-spacing:0.586px;">Ops Center</span>
<span class="t" style="left:1836.00px;top:162.00px;font-size:24px;color:#111;letter-spacing:0.527px;">Operation Plan</span>
<span class="t" style="left:2267.70px;top:199.95px;font-size:17.5px;color:#ffffff;letter-spacing:0.671px;">New Task</span>
<span class="t" style="left:54.30px;top:269.60px;font-size:24px;color:#949ba2;letter-spacing:0.525px;font-style:italic;">Type to filter</span>
<span class="t" style="left:490.30px;top:270.50px;font-size:24px;color:#3f474f;letter-spacing:0.347px;">Sort by: Assignation Date</span>
<span class="t" style="left:4.00px;top:420.00px;font-size:24px;color:#3f474f;letter-spacing:0.446px;">Group by :</span>
<span class="t" style="left:126.20px;top:420.00px;font-size:24px;color:#df8a13;letter-spacing:0.258px;">Projects</span>
<span class="t" style="left:668.20px;top:420.00px;font-size:24px;color:#3f474f;letter-spacing:0.291px;">(Collapse All)</span>
<span class="t" style="left:878.00px;top:244.75px;font-size:24.5px;color:#3f474f;letter-spacing:0.434px;">Nov 28, 2025 ; Jan 30, 2027</span>
<span class="t" style="left:1286.60px;top:246.95px;font-size:19.5px;color:#c2c3c5;letter-spacing:0.029px;">Today</span>
<span class="t" style="left:1418.70px;top:246.95px;font-size:19.5px;color:#c2c3c5;letter-spacing:0.955px;">48h</span>
<span class="t" style="left:1533.30px;top:246.95px;font-size:19.5px;color:#c2c3c5;letter-spacing:-0.248px;">Week</span>
<span class="t" style="left:46.90px;top:480.70px;font-size:28.8px;color:#3f474f;letter-spacing:0.382px;font-weight:bold;">Inbox</span>
<span class="t" style="left:46.70px;top:973.90px;font-size:28.8px;color:#3f474f;letter-spacing:0.610px;font-weight:bold;">Draft Tasks</span>
<span class="t" style="left:112.00px;top:1074.40px;font-size:28.8px;color:#3f474f;letter-spacing:0.595px;font-weight:bold;">OP Project</span>
<span class="t" style="left:101.00px;top:526.15px;font-size:23.5px;color:#fff;">2</span>
<span class="t" style="left:298.95px;top:526.15px;font-size:23.5px;color:#fff;">2</span>
<span class="t" style="left:477.70px;top:526.15px;font-size:23.5px;color:#fff;letter-spacing:0.372px;">Total 4</span>
<span class="t" style="left:250.95px;top:1119.55px;font-size:23.5px;color:#fff;">5</span>
<span class="t" style="left:528.00px;top:1119.55px;font-size:23.5px;color:#fff;letter-spacing:0.489px;">Total 5</span>
<span class="t" style="left:83.50px;top:589.55px;font-size:23.5px;color:#434c54;letter-spacing:0.430px;">Battery Inspection 18</span>
<span class="t" style="left:96.60px;top:626.00px;font-size:17.8px;color:#fff;letter-spacing:0.233px;font-weight:bold;">Started</span>
<span class="t" style="left:184.30px;top:626.15px;font-size:17.5px;color:#ff1a1a;letter-spacing:0.957px;">Dec 24, 2025</span>
<span class="t" style="left:334.30px;top:626.30px;font-size:17.2px;color:#434c54;letter-spacing:0.588px;">To: bn.root.preprod.3@ptt.com</span>
<span class="t" style="left:715.50px;top:602.35px;font-size:24.3px;color:#fff;letter-spacing:0.807px;">View</span>
<span class="t" style="left:83.30px;top:678.55px;font-size:23.5px;color:#434c54;letter-spacing:0.655px;">Battery Installation</span>
<span class="t" style="left:95.60px;top:715.00px;font-size:17.8px;color:#fff;letter-spacing:0.545px;font-weight:bold;">Done</span>
<span class="t" style="left:167.30px;top:715.15px;font-size:17.5px;color:#ff1a1a;letter-spacing:1.048px;">Dec 26, 2025</span>
<span class="t" style="left:317.90px;top:715.30px;font-size:17.2px;color:#434c54;letter-spacing:0.580px;">To: bn.root.preprod.3@ptt.com</span>
<span class="t" style="left:715.50px;top:691.35px;font-size:24.3px;color:#fff;letter-spacing:0.807px;">View</span>
<span class="t" style="left:83.30px;top:767.55px;font-size:23.5px;color:#434c54;letter-spacing:0.655px;">Battery Installation</span>
<span class="t" style="left:96.60px;top:804.00px;font-size:17.8px;color:#fff;letter-spacing:0.233px;font-weight:bold;">Started</span>
<span class="t" style="left:184.30px;top:804.15px;font-size:17.5px;color:#ff1a1a;letter-spacing:0.957px;">Dec 24, 2025</span>
<span class="t" style="left:334.30px;top:804.30px;font-size:17.2px;color:#434c54;letter-spacing:0.588px;">To: bn.root.preprod.3@ptt.com</span>
<span class="t" style="left:715.50px;top:780.35px;font-size:24.3px;color:#fff;letter-spacing:0.807px;">View</span>
<span class="t" style="left:83.30px;top:856.55px;font-size:23.5px;color:#434c54;letter-spacing:0.683px;">Battery Functionality</span>
<span class="t" style="left:95.60px;top:893.00px;font-size:17.8px;color:#fff;letter-spacing:0.545px;font-weight:bold;">Done</span>
<span class="t" style="left:167.30px;top:893.15px;font-size:17.5px;color:#ff1a1a;letter-spacing:0.585px;">Dec 13, 2025</span>
<span class="t" style="left:312.10px;top:893.30px;font-size:17.2px;color:#434c54;letter-spacing:0.605px;">To: bn.root.preprod.3@ptt.com</span>
<span class="t" style="left:715.50px;top:869.35px;font-size:24.3px;color:#fff;letter-spacing:0.807px;">View</span>
<span class="t" style="left:191.40px;top:1181.95px;font-size:23.5px;color:#434c54;letter-spacing:0.393px;">E-I Data loss with parts</span>
<span class="t" style="left:203.60px;top:1219.40px;font-size:17.8px;color:#fff;letter-spacing:1.235px;font-weight:bold;">New</span>
<span class="t" style="left:267.80px;top:1219.55px;font-size:17.5px;color:#ff1a1a;letter-spacing:1.048px;">Dec 22, 2025</span>
<span class="t" style="left:432.50px;top:1219.70px;font-size:17.2px;color:#434c54;letter-spacing:0.712px;">To: Open Task Queue</span>
<span class="t" style="left:715.50px;top:1196.15px;font-size:24.3px;color:#fff;letter-spacing:0.807px;">View</span>
<span class="t" style="left:191.20px;top:1271.55px;font-size:23.5px;color:#434c54;letter-spacing:0.683px;">Battery Functionality</span>
<span class="t" style="left:852.20px;top:304.80px;font-size:18px;color:#333;letter-spacing:0.922px;">Dec 2025</span>
<span class="t" style="left:851.80px;top:414.50px;font-size:18px;color:#333;letter-spacing:0.922px;">Dec 2025</span>
<span class="t" style="left:972.37px;top:304.80px;font-size:18px;color:#333;letter-spacing:0.692px;">Jan 2026</span>
<span class="t" style="left:971.07px;top:414.50px;font-size:18px;color:#333;letter-spacing:0.692px;">Jan 2026</span>
<span class="t" style="left:1090.54px;top:304.80px;font-size:18px;color:#333;letter-spacing:0.893px;">Feb 2026</span>
<span class="t" style="left:1086.34px;top:414.50px;font-size:18px;color:#333;letter-spacing:0.893px;">Feb 2026</span>
<span class="t" style="left:1198.17px;top:304.80px;font-size:18px;color:#333;letter-spacing:0.838px;">Mar 2026</span>
<span class="t" style="left:1192.27px;top:414.50px;font-size:18px;color:#333;letter-spacing:0.838px;">Mar 2026</span>
<span class="t" style="left:1318.34px;top:304.80px;font-size:18px;color:#333;letter-spacing:0.837px;">Apr 2026</span>
<span class="t" style="left:1310.54px;top:414.50px;font-size:18px;color:#333;letter-spacing:0.837px;">Apr 2026</span>
<span class="t" style="left:1432.66px;top:304.80px;font-size:18px;color:#333;letter-spacing:0.852px;">May 2026</span>
<span class="t" style="left:1423.03px;top:414.50px;font-size:18px;color:#333;letter-spacing:0.852px;">May 2026</span>
<span class="t" style="left:1552.83px;top:304.80px;font-size:18px;color:#333;letter-spacing:0.735px;">Jun 2026</span>
<span class="t" style="left:1541.30px;top:414.50px;font-size:18px;color:#333;letter-spacing:0.735px;">Jun 2026</span>
<span class="t" style="left:1668.15px;top:304.80px;font-size:18px;color:#333;letter-spacing:0.780px;">Jul 2026</span>
<span class="t" style="left:1654.80px;top:414.50px;font-size:18px;color:#333;letter-spacing:0.780px;">Jul 2026</span>
<span class="t" style="left:1787.32px;top:304.80px;font-size:18px;color:#333;letter-spacing:0.920px;">Aug 2026</span>
<span class="t" style="left:1772.07px;top:414.50px;font-size:18px;color:#333;letter-spacing:0.920px;">Aug 2026</span>
<span class="t" style="left:1906.49px;top:304.80px;font-size:18px;color:#333;letter-spacing:0.691px;">Sep 2026</span>
<span class="t" style="left:1889.34px;top:414.50px;font-size:18px;color:#333;letter-spacing:0.691px;">Sep 2026</span>
<span class="t" style="left:2021.81px;top:304.80px;font-size:18px;color:#333;letter-spacing:0.795px;">Oct 2026</span>
<span class="t" style="left:2002.83px;top:414.50px;font-size:18px;color:#333;letter-spacing:0.795px;">Oct 2026</span>
<span class="t" style="left:2139.98px;top:304.80px;font-size:18px;color:#333;letter-spacing:1.022px;">Nov 2026</span>
<span class="t" style="left:2119.10px;top:414.50px;font-size:18px;color:#333;letter-spacing:1.022px;">Nov 2026</span>
<span class="t" style="left:2255.30px;top:304.80px;font-size:18px;color:#333;letter-spacing:0.865px;">Dec 2026</span>
<span class="t" style="left:2232.59px;top:414.50px;font-size:18px;color:#333;letter-spacing:0.865px;">Dec 2026</span>
<span class="t" style="left:2375.47px;top:304.80px;font-size:18px;color:#333;letter-spacing:0.406px;">Jan 2027</span>
<span class="t" style="left:2350.87px;top:414.50px;font-size:18px;color:#333;letter-spacing:0.406px;">Jan 2027</span>
</div>
<div class="a" style="left:0.00px;top:1281.00px;width:2486.00px;height:25.50px;background:#fafafa;"></div>
<div class="a" style="left:0.00px;top:1280.50px;width:2460.00px;height:1.50px;background:#e4e4e4;"></div>
<div class="a" style="left:0.00px;top:1305.50px;width:2486.00px;height:1.00px;background:#e3e1e1;"></div>
<div class="a" style="left:0.00px;top:1306.50px;width:2486.00px;height:1.00px;background:#cdc9c9;"></div>
<div class="a" style="left:0.00px;top:1307.50px;width:2486.00px;height:4.50px;background:#e5e5e5;"></div>
<div class="a" style="left:2484.50px;top:407.00px;width:1.00px;height:900.00px;background:#f0f0f0;"></div>
<div class="a" style="left:2485.50px;top:218.00px;width:1.50px;height:1089.00px;background:#ebebeb;"></div>
<div class="a" style="left:2493.00px;top:222.50px;width:14.00px;height:1088.00px;background:#c1c1c1;border-radius:7px;"></div>
<div class="a" style="left:1222.40px;top:1310.30px;width:2.40px;height:2.40px;background:#555;border-radius:50%;"></div>
<div class="a" style="left:1231.20px;top:1310.30px;width:2.40px;height:2.40px;background:#555;border-radius:50%;"></div>
<div class="a" style="left:1240.00px;top:1310.30px;width:2.40px;height:2.40px;background:#555;border-radius:50%;"></div>
<svg class="a" style="left:2290.00px;top:266.00px;" width="40.00" height="40.00" viewBox="2290 266 40 40" preserveAspectRatio="none"><path d="M2301.6,283.5 L2301.0,274.0 Q2301.2,270.8 2303.6,271.0 Q2306.0,271.2 2306.6,274.0 L2308.0,279.6 Q2309.6,276.8 2311.6,278.4 L2312.4,279.6 Q2314.6,277.2 2316.6,279.2 L2317.2,280.6 Q2320.0,279.4 2321.4,281.6 Q2322.8,284 2322.2,288 Q2321.5,293 2318.4,296 L2318.0,299.0 L2305.0,296.4 Q2302,292.6 2298.6,289.2 Q2296.0,286.4 2296.6,283.4 Q2297.4,281.2 2299.6,282.2 Z" fill="#fff" stroke="#111" stroke-width="1.5" stroke-linejoin="round"/><path d="M2309.8,286 V293.4 M2312.8,286 V293.4 M2315.9,286 V293.4" stroke="#111" stroke-width="1.2" fill="none" stroke-linecap="round"/></svg>
<div class="a" style="left:2271.00px;top:225.00px;width:76.00px;height:65.00px;border:7px solid #ff0000;box-sizing:border-box;box-shadow:0 4px 5px rgba(0,0,0,.6);"></div>
<svg class="a" style="left:2270.00px;top:280.00px;filter:drop-shadow(3px 5px 7px rgba(0,0,0,.5));overflow:visible;" width="80.00" height="100.00" viewBox="2270 280 80 100" preserveAspectRatio="none"><path d="M2307.9,290.6 L2321.4,316.3 L2312.3,316.3 L2313.7,356.9 L2306.6,356.9 L2305.2,316.3 L2295.7,316.3 Z" fill="#ff0000"/></svg>
</body></html>
